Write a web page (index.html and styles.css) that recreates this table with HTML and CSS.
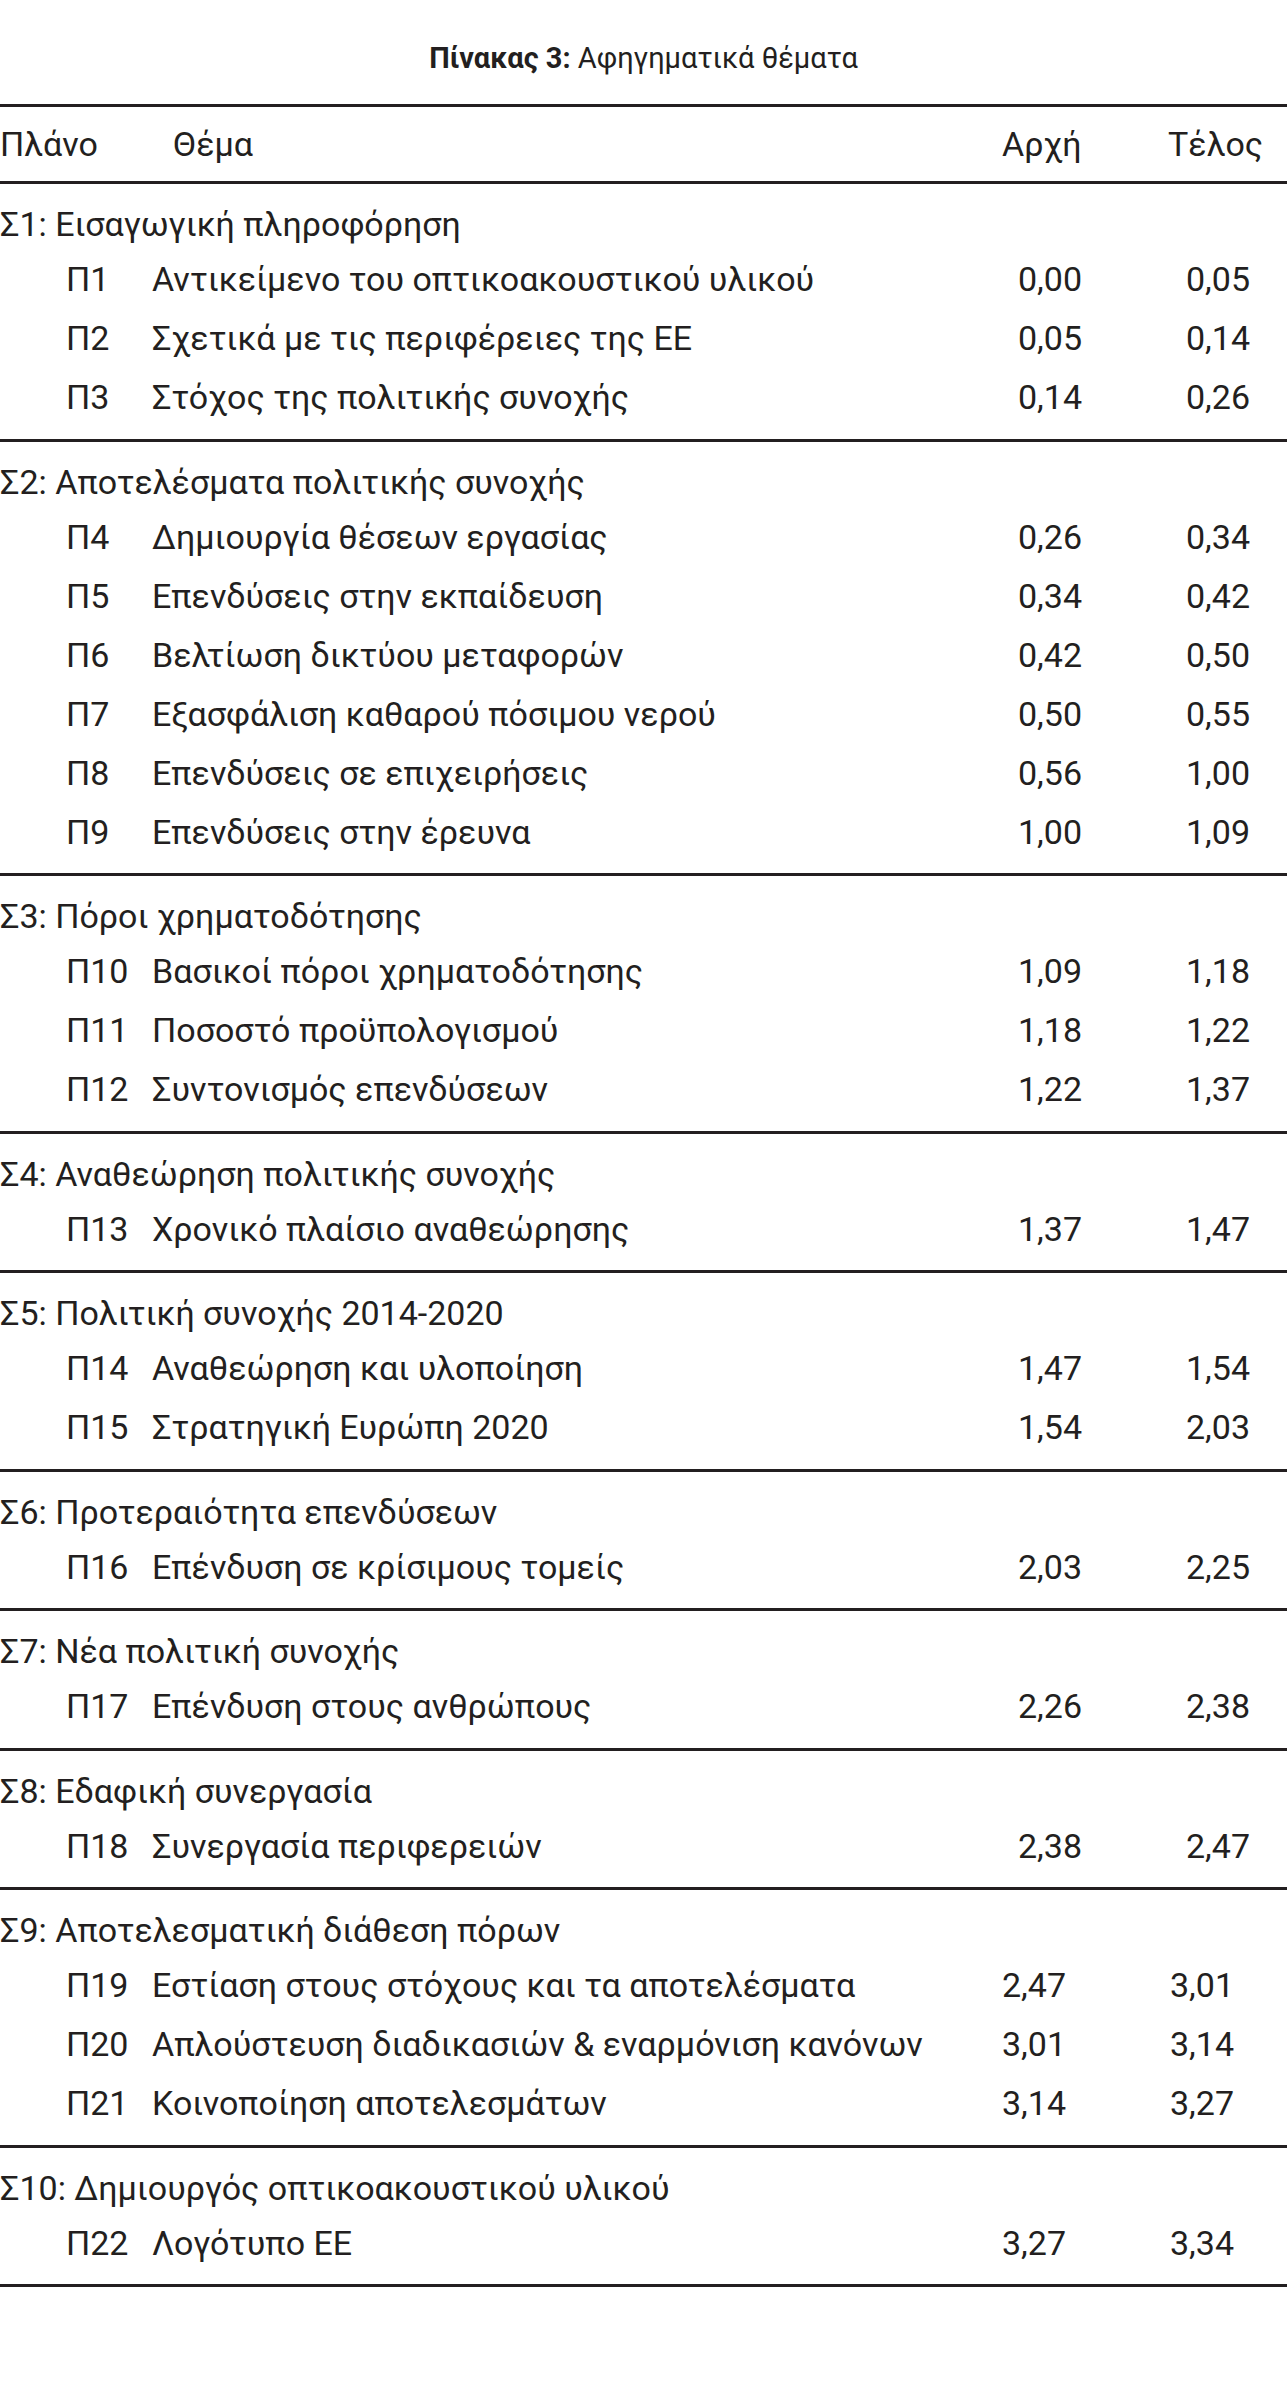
FILE: index.html
```html
<!DOCTYPE html>
<html lang="el">
<head>
<meta charset="utf-8">
<title>Πίνακας 3: Αφηγηματικά θέματα</title>
<link rel="stylesheet" href="styles.css">
</head>
<body>
<div class="page">
  <p class="caption"><b>Πίνακας 3:</b> Αφηγηματικά θέματα</p>
  <div class="table">
    <div class="head">
      <span class="h-plan">Πλάνο</span>
      <span class="h-theme">Θέμα</span>
      <span class="h-start">Αρχή</span>
      <span class="h-end">Τέλος</span>
    </div>

    <section class="group">
      <div class="group-title">Σ1: Εισαγωγική πληροφόρηση</div>
      <div class="row"><span class="code">Π1</span><span class="theme">Αντικείμενο του οπτικοακουστικού υλικού</span><span class="start">0,00</span><span class="end">0,05</span></div>
      <div class="row"><span class="code">Π2</span><span class="theme">Σχετικά με τις περιφέρειες της ΕΕ</span><span class="start">0,05</span><span class="end">0,14</span></div>
      <div class="row"><span class="code">Π3</span><span class="theme">Στόχος της πολιτικής συνοχής</span><span class="start">0,14</span><span class="end">0,26</span></div>
    </section>

    <section class="group">
      <div class="group-title">Σ2: Αποτελέσματα πολιτικής συνοχής</div>
      <div class="row"><span class="code">Π4</span><span class="theme">Δημιουργία θέσεων εργασίας</span><span class="start">0,26</span><span class="end">0,34</span></div>
      <div class="row"><span class="code">Π5</span><span class="theme">Επενδύσεις στην εκπαίδευση</span><span class="start">0,34</span><span class="end">0,42</span></div>
      <div class="row"><span class="code">Π6</span><span class="theme">Βελτίωση δικτύου μεταφορών</span><span class="start">0,42</span><span class="end">0,50</span></div>
      <div class="row"><span class="code">Π7</span><span class="theme">Εξασφάλιση καθαρού πόσιμου νερού</span><span class="start">0,50</span><span class="end">0,55</span></div>
      <div class="row"><span class="code">Π8</span><span class="theme">Επενδύσεις σε επιχειρήσεις</span><span class="start">0,56</span><span class="end">1,00</span></div>
      <div class="row"><span class="code">Π9</span><span class="theme">Επενδύσεις στην έρευνα</span><span class="start">1,00</span><span class="end">1,09</span></div>
    </section>

    <section class="group">
      <div class="group-title">Σ3: Πόροι χρηματοδότησης</div>
      <div class="row"><span class="code">Π10</span><span class="theme">Βασικοί πόροι χρηματοδότησης</span><span class="start">1,09</span><span class="end">1,18</span></div>
      <div class="row"><span class="code">Π11</span><span class="theme">Ποσοστό προϋπολογισμού</span><span class="start">1,18</span><span class="end">1,22</span></div>
      <div class="row"><span class="code">Π12</span><span class="theme">Συντονισμός επενδύσεων</span><span class="start">1,22</span><span class="end">1,37</span></div>
    </section>

    <section class="group">
      <div class="group-title">Σ4: Αναθεώρηση πολιτικής συνοχής</div>
      <div class="row"><span class="code">Π13</span><span class="theme">Χρονικό πλαίσιο αναθεώρησης</span><span class="start">1,37</span><span class="end">1,47</span></div>
    </section>

    <section class="group">
      <div class="group-title">Σ5: Πολιτική συνοχής 2014-2020</div>
      <div class="row"><span class="code">Π14</span><span class="theme">Αναθεώρηση και υλοποίηση</span><span class="start">1,47</span><span class="end">1,54</span></div>
      <div class="row"><span class="code">Π15</span><span class="theme">Στρατηγική Ευρώπη 2020</span><span class="start">1,54</span><span class="end">2,03</span></div>
    </section>

    <section class="group">
      <div class="group-title">Σ6: Προτεραιότητα επενδύσεων</div>
      <div class="row"><span class="code">Π16</span><span class="theme">Επένδυση σε κρίσιμους τομείς</span><span class="start">2,03</span><span class="end">2,25</span></div>
    </section>

    <section class="group">
      <div class="group-title">Σ7: Νέα πολιτική συνοχής</div>
      <div class="row"><span class="code">Π17</span><span class="theme">Επένδυση στους ανθρώπους</span><span class="start">2,26</span><span class="end">2,38</span></div>
    </section>

    <section class="group">
      <div class="group-title">Σ8: Εδαφική συνεργασία</div>
      <div class="row"><span class="code">Π18</span><span class="theme">Συνεργασία περιφερειών</span><span class="start">2,38</span><span class="end">2,47</span></div>
    </section>

    <section class="group group-left">
      <div class="group-title">Σ9: Αποτελεσματική διάθεση πόρων</div>
      <div class="row"><span class="code">Π19</span><span class="theme">Εστίαση στους στόχους και τα αποτελέσματα</span><span class="start">2,47</span><span class="end">3,01</span></div>
      <div class="row"><span class="code">Π20</span><span class="theme">Απλούστευση διαδικασιών &amp; εναρμόνιση κανόνων</span><span class="start">3,01</span><span class="end">3,14</span></div>
      <div class="row"><span class="code">Π21</span><span class="theme">Κοινοποίηση αποτελεσμάτων</span><span class="start">3,14</span><span class="end">3,27</span></div>
    </section>

    <section class="group group-left">
      <div class="group-title">Σ10: Δημιουργός οπτικοακουστικού υλικού</div>
      <div class="row"><span class="code">Π22</span><span class="theme">Λογότυπο ΕΕ</span><span class="start">3,27</span><span class="end">3,34</span></div>
    </section>
  </div>
</div>
</body>
</html>
```

FILE: styles.css
```css
html, body {
  margin: 0;
  padding: 0;
  background: #ffffff;
}

body {
  font-family: Roboto, "Noto Sans", "DejaVu Sans", sans-serif;
  color: #231f20;
}

.page {
  width: 1287px;
  overflow: hidden;
}

.caption {
  margin: 0;
  height: 104px;
  padding-top: 39px;
  box-sizing: border-box;
  font-size: 29px;
  line-height: 38px;
  text-align: center;
}

.caption b {
  font-weight: 700;
}

.table {
  width: 100%;
  font-size: 34px;
}

.head {
  display: grid;
  grid-template-columns: 173px 829px 166px 1fr;
  align-items: center;
  height: 74px;
  border-top: 3px solid #231f20;
  border-bottom: 3px solid #231f20;
  line-height: 74px;
}

.group {
  padding-top: 15px;
  padding-bottom: 11.5px;
  border-bottom: 3px solid #231f20;
}

.group-title {
  height: 51px;
  line-height: 51px;
  white-space: nowrap;
}

.row {
  display: grid;
  grid-template-columns: 66px 86px 850px 80px 168px;
  height: 59px;
  line-height: 59px;
  white-space: nowrap;
}

.code {
  grid-column: 2;
}

.theme {
  grid-column: 3;
}

.start {
  grid-column: 4;
  text-align: right;
}

.end {
  grid-column: 5;
  text-align: right;
}

.group-left .start {
  text-align: left;
}

.group-left .end {
  text-align: left;
  padding-left: 88px;
}
```
